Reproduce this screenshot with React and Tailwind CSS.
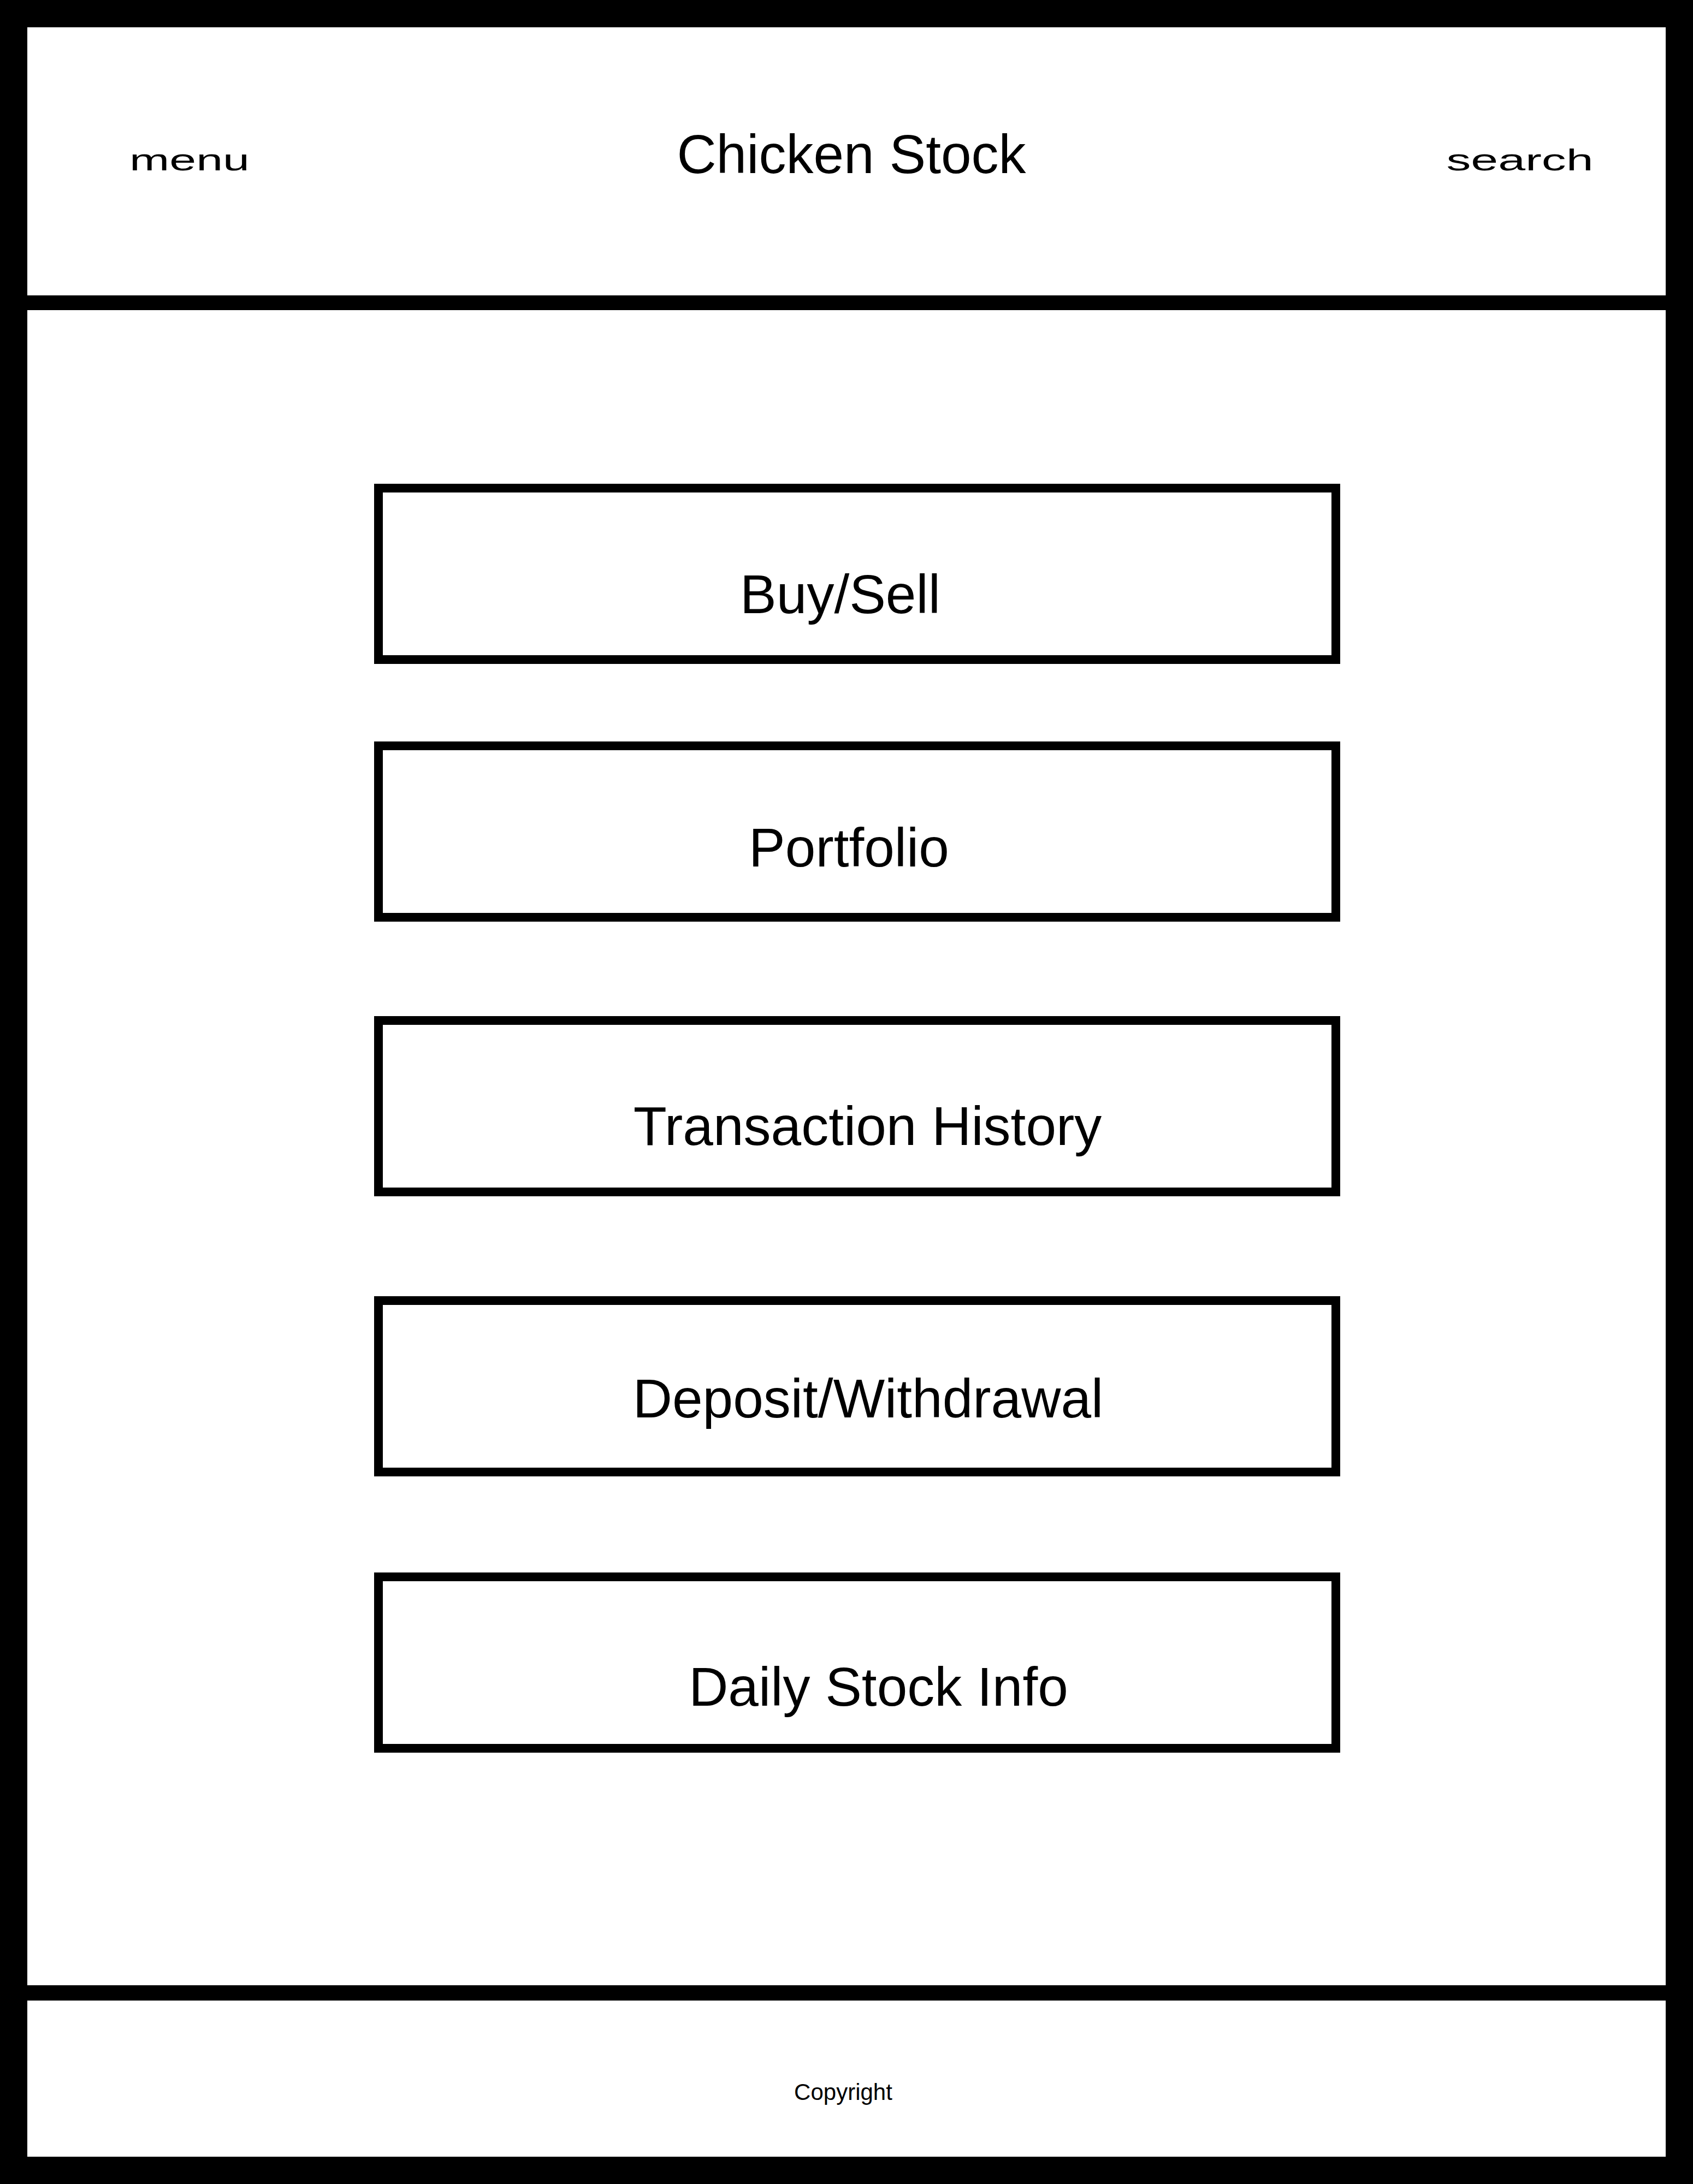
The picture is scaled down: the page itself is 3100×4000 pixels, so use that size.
/**
 * Chicken Stock wireframe home screen
 * Header with menu / title / search, five nav boxes, copyright footer.
 */
const navItems = [
  { label: 'Buy/Sell', box: 'mt-[318px]', text: 'pt-[136px] pr-[62px]' },
  { label: 'Portfolio', box: 'mt-[142px]', text: 'pt-[128px] pr-[30px]' },
  { label: 'Transaction History', box: 'mt-[173px]', text: 'pt-[135px] pl-[38px]' },
  { label: 'Deposit/Withdrawal', box: 'mt-[183px]', text: 'pt-[121px] pl-[40px]' },
  { label: 'Daily Stock Info', box: 'mt-[176px]', text: 'pt-[143px] pl-[78px]' },
];

function NavBox({ label, box, text }) {
  return (
    <div className={`${box} ml-[635px] w-[1769px] h-[330px] border-[16px] border-black flex justify-center items-start`}>
      <span className={`${text} text-[100px] leading-[100px] whitespace-nowrap`}>{label}</span>
    </div>
  );
}

export default function App() {
  return (
    <div className="w-[3100px] h-[4000px] border-[50px] border-black bg-white text-black flex flex-col font-['Liberation_Sans',Arial,sans-serif]">
      {/* Header */}
      <header className="h-[518px] shrink-0 border-b-[27px] border-black grid grid-cols-[594px_1fr_534px] items-start">
        <div className="flex justify-center pt-[215px]">
          <span className="inline-block text-[56px] leading-[56px] scale-x-[1.57] origin-center">menu</span>
        </div>
        <div className="flex justify-center pt-[182px] pr-[42px]">
          <h1 className="text-[100px] leading-[100px] whitespace-nowrap">Chicken Stock</h1>
        </div>
        <div className="flex justify-center pt-[215px]">
          <span className="inline-block text-[56px] leading-[56px] scale-x-[1.6] origin-center">search</span>
        </div>
      </header>

      {/* Nav boxes */}
      <main className="flex-1 flex flex-col items-start">
        {navItems.map((item) => (
          <NavBox key={item.label} {...item} />
        ))}
      </main>

      {/* Footer */}
      <footer className="h-[314px] shrink-0 border-t-[28px] border-black flex justify-center items-start pt-[147px] pr-[12px]">
        <span className="text-[42px] leading-[42px]">Copyright</span>
      </footer>
    </div>
  );
}
